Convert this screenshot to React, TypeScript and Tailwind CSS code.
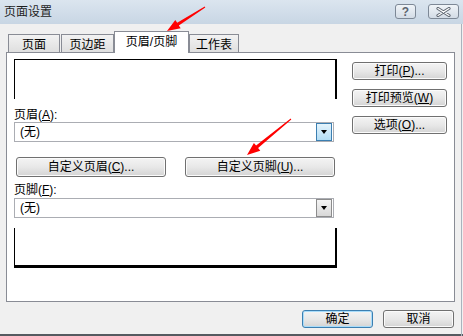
import React from 'react';

const U: React.FC<{ c: string }> = ({ c }) => (
  <span className="underline underline-offset-1">{c}</span>
);

const Btn: React.FC<{ className?: string; primary?: boolean; children: React.ReactNode }> = ({
  className = '',
  primary,
  children,
}) => (
  <div
    className={`flex items-center justify-center rounded-[3px] border bg-linear-to-b from-[#f4f4f4] via-[#e8e8e8] to-[#d4d4d4] text-[12px] leading-none text-black ${
      primary ? 'border-[#3c7fb1] shadow-[inset_0_0_0_1px_#a8dcfa]' : 'border-[#707070] shadow-[inset_0_0_0_1px_#fbfbfb]'
    } ${className}`}
  >
    {children}
  </div>
);

const Combo: React.FC<{ active?: boolean }> = ({ active }) => (
  <div className="flex h-[20px] w-[320px] items-center border border-[#abadb3] bg-white">
    <span className="flex-1 pl-[5px] text-[12px] leading-none">(无)</span>
    <div
      className={`mr-px flex h-[18px] w-[16px] items-center justify-center border ${
        active
          ? 'border-[#3c7fb1] bg-linear-to-b from-[#e5f4fc] to-[#b3ddf5]'
          : 'border-[#8c8c8c] bg-linear-to-b from-[#f4f4f4] to-[#d8d8d8]'
      }`}
    >
      <div className="h-0 w-0 border-x-[3.5px] border-t-[4px] border-x-transparent border-t-black" />
    </div>
  </div>
);

const Tab: React.FC<{ w: string; active?: boolean; children: React.ReactNode }> = ({ w, active, children }) => (
  <div
    className={`flex items-center justify-center border border-[#898c95] text-[12px] leading-none ${w} ${
      active
        ? 'z-10 h-[22px] border-b-0 bg-white pb-[2px]'
        : 'h-[19px] border-b-0 bg-linear-to-b from-[#f2f2f2] to-[#dedede] pt-[2px]'
    }`}
  >
    {children}
  </div>
);

export default function App() {
  return (
    <div className="relative flex h-[336px] w-[463px] flex-col overflow-hidden bg-[#f0f0f0] font-['Liberation_Sans','Noto_Sans_CJK_SC',sans-serif] text-black">
      {/* title bar */}
      <div className="flex h-[24px] items-start bg-linear-to-b from-[#dbe5ef] to-[#c8d6e4]">
        <span className="ml-[4px] mt-[5px] text-[12px] leading-[14px] text-[#1e1e1e]">页面设置</span>
        <div className="ml-auto mr-[4px] mt-[4px] flex gap-[12px]">
          <div className="flex h-[15px] w-[21px] items-center justify-center rounded-[3px] border border-[#7d8896] bg-linear-to-b from-[#f0f4f8] to-[#d3dce6]">
            <span className="text-[12px] font-bold leading-none text-[#5d6570]">?</span>
          </div>
          <div className="flex h-[15px] w-[31px] items-center justify-center rounded-[3px] border border-[#7d8896] bg-linear-to-b from-[#f0f4f8] to-[#d3dce6]">
            <svg width="15" height="10" viewBox="0 0 15 10">
              <path d="M2 1.5 L13 8.5 M13 1.5 L2 8.5" stroke="#5d6570" strokeWidth="3.2" strokeLinecap="round" />
              <path d="M2 1.5 L13 8.5 M13 1.5 L2 8.5" stroke="#ffffff" strokeWidth="1.3" strokeLinecap="round" />
            </svg>
          </div>
        </div>
      </div>

      {/* tabs */}
      <div className="ml-[8px] mt-[7px] flex items-end">
        <Tab w="w-[52px]">页面</Tab>
        <div className="w-px" />
        <Tab w="w-[53px]">页边距</Tab>
        <Tab w="w-[75px]" active>
          页眉/页脚
        </Tab>
        <Tab w="w-[50px]">工作表</Tab>
      </div>

      {/* panel */}
      <div className="-mt-px ml-[6px] flex h-[250px] w-[449px] border border-[#898c95] bg-white">
        <div className="flex w-[331px] flex-col pl-[7px] pt-[6px]">
          <div className="h-[40px] w-[323px] border-l border-r-2 border-t border-black" />
          <div className="mt-[9px] h-[14px] text-[12px] leading-[14px]">
            页眉(<U c="A" />):
          </div>
          <Combo active />
          <div className="mt-[15px] flex gap-[19px] pl-[2px]">
            <Btn className="h-[20px] w-[150px]">
              自定义页眉(<U c="C" />)...
            </Btn>
            <Btn className="h-[20px] w-[150px]">
              自定义页脚(<U c="U" />)...
            </Btn>
          </div>
          <div className="mt-[6px] h-[14px] text-[12px] leading-[14px]">
            页脚(<U c="F" />):
          </div>
          <div className="mt-px">
            <Combo />
          </div>
          <div className="mt-[10px] h-[40px] w-[323px] border-b-[3px] border-l border-r-2 border-black" />
        </div>
        <div className="ml-[14px] flex flex-col gap-[9px] pt-[9px]">
          <Btn className="h-[18px] w-[95px]">
            打印(<U c="P" />)...
          </Btn>
          <Btn className="h-[18px] w-[95px]">
            打印预览(<U c="W" />)
          </Btn>
          <Btn className="h-[18px] w-[95px]">
            选项(<U c="O" />)...
          </Btn>
        </div>
      </div>

      {/* bottom buttons */}
      <div className="mt-[8px] flex justify-end gap-[10px] pr-[9px]">
        <Btn primary className="h-[18px] w-[71px]">
          确定
        </Btn>
        <Btn className="h-[18px] w-[71px]">取消</Btn>
      </div>

      <div className="absolute bottom-0 left-0 h-[2px] w-full bg-[#555a60]" />
      <div className="absolute right-[1px] top-[24px] h-full w-px bg-[#a9b3bd]" />

      {/* red annotation arrows */}
      <svg className="pointer-events-none absolute left-0 top-0" width="463" height="336">
        <polygon
          points="205.3,7.4 178.8,25.4 180.7,28.3 167,31 175.3,19.9 177.2,22.8 204.7,6.6"
          fill="#ff0000"
        />
        <polygon
          points="291.3,119.4 258.1,148 260.3,150.7 247,155 253.9,142.9 256.1,145.6 290.7,118.6"
          fill="#ff0000"
        />
      </svg>
    </div>
  );
}
